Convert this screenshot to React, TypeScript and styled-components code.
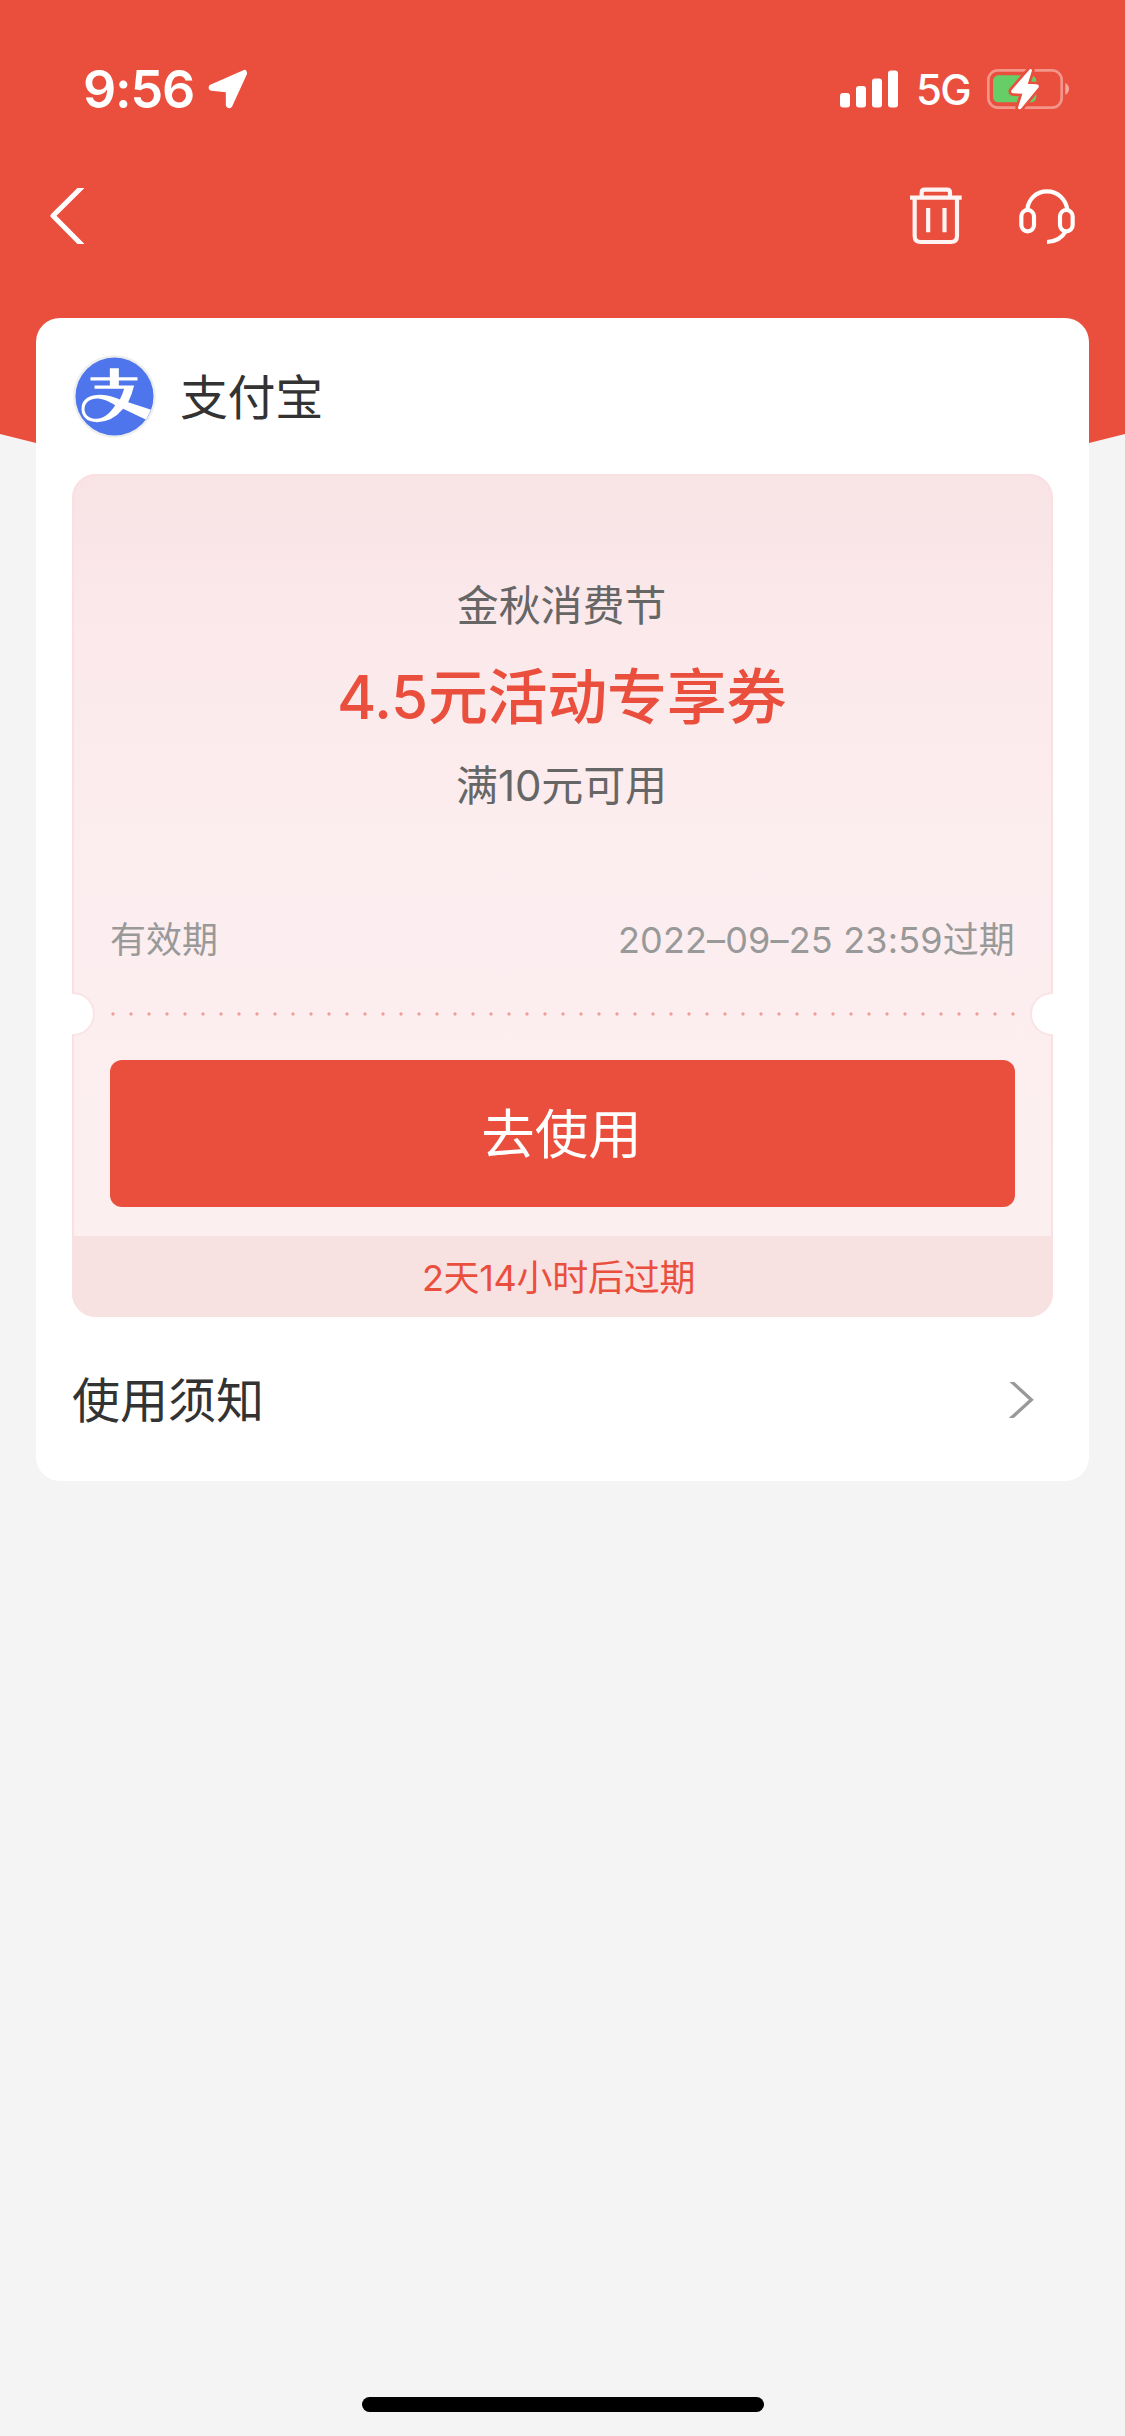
import React from 'react';
import styled, { createGlobalStyle } from 'styled-components';

const red = '#ea4f3d';

const GlobalStyle = createGlobalStyle`
  * { box-sizing: border-box; }
  body {
    margin: 0;
    background: #f4f4f4;
    font-family: Inter, 'Noto Sans CJK SC', sans-serif;
  }
`;

const Page = styled.div`
  width: 1125px;
  height: 2436px;
  display: flex;
  flex-direction: column;
  background: #f4f4f4;
  overflow: hidden;
`;

const Hero = styled.header`
  flex: none;
  height: 443px;
  background: ${red};
  color: #fff;
  clip-path: polygon(0 0, 100% 0, 100% 434px, 1089px 443px, 36px 443px, 0 434px);
`;

const StatusBar = styled.div`
  height: 134px;
  padding: 44px 55px 0 83px;
  display: flex;
  align-items: center;
  justify-content: space-between;
`;

const StatusGroup = styled.div<{ $gap: number }>`
  display: flex;
  align-items: center;
  gap: ${(p) => p.$gap}px;
`;

const Time = styled.span`
  width: 112px;
  padding-top: 2px;
  font-size: 52px;
  line-height: 60px;
  font-weight: 600;
  letter-spacing: -1.2px;
  white-space: nowrap;
`;

const Network = styled.span`
  width: 53px;
  padding-top: 2px;
  font-size: 42px;
  line-height: 60px;
  font-weight: 500;
  letter-spacing: -1.8px;
  white-space: nowrap;
`;

const NavBar = styled.nav`
  height: 163px;
  padding: 0 50px;
  display: flex;
  align-items: center;
  justify-content: space-between;
`;

const NavActions = styled.div`
  display: flex;
  gap: 57px;
`;

const Icon = styled.svg<{ $w: number; $h: number }>`
  display: block;
  flex: none;
  width: ${(p) => p.$w}px;
  height: ${(p) => p.$h}px;
`;

const Card = styled.main`
  position: relative;
  flex: none;
  margin: -125px 36px 0;
  height: 1163px;
  padding: 0 36px;
  border-radius: 24px;
  background: #fff;
`;

const Merchant = styled.div`
  height: 156px;
  padding-left: 1px;
  display: flex;
  align-items: center;
  gap: 24px;
`;

const MerchantName = styled.span`
  padding-top: 4px;
  font-size: 48px;
  line-height: 60px;
  letter-spacing: -0.4px;
  color: #333;
`;

const Coupon = styled.section`
  height: 843px;
  display: flex;
  flex-direction: column;
  border-radius: 24px;
  overflow: hidden;
  background: linear-gradient(#f8e3e5 0, #fbe9eb 160px, #fceef0 430px, #fcefef 100%);
  box-shadow: inset 0 0 0 2px #fae0e2;
`;

const Offer = styled.div`
  height: 436px;
  padding: 102px 2px 0 0;
  display: flex;
  flex-direction: column;
  align-items: center;
`;

const OfferNote = styled.p`
  margin: 0;
  font-size: 42px;
  line-height: 60px;
  letter-spacing: -0.1px;
  color: #666;
  white-space: nowrap;
`;

const OfferTitle = styled.h1`
  margin: 16px 0 14px;
  font-size: 60px;
  line-height: 90px;
  font-weight: 500;
  letter-spacing: -0.3px;
  color: ${red};
  white-space: nowrap;
`;

const Validity = styled.div`
  height: 60px;
  padding: 0 38px;
  display: flex;
  justify-content: space-between;
  font-size: 36px;
  line-height: 61px;
  color: #999;
`;

const Expiry = styled.span`
  letter-spacing: 0.15px;
`;

const TearLine = styled.div`
  height: 90px;
  padding-bottom: 3px;
  display: flex;
  align-items: center;
  justify-content: space-between;
`;

const Notch = styled.i<{ $side: 'left' | 'right' }>`
  width: 23px;
  height: 44px;
  background: #fff;
  border: 2px solid #fae3e5;
  border-${(p) => p.$side}: 0;
  border-radius: ${(p) => (p.$side === 'left' ? '0 22px 22px 0' : '22px 0 0 22px')};
`;

const Dots = styled.div`
  width: 918px;
  height: 4px;
  background: radial-gradient(circle at 9px 2px, #f0a09a 1.2px, transparent 2.1px) 0 0 / 18px 4px repeat-x;
`;

const UseButton = styled.button`
  height: 147px;
  margin: 0 38px;
  padding: 3px 2px 0 0;
  border: 0;
  border-radius: 12px;
  background: ${red};
  color: #fff;
  font: 400 53.5px/144px Inter, 'Noto Sans CJK SC', sans-serif;
`;

const Countdown = styled.div`
  margin-top: 29px;
  height: 81px;
  padding: 2px 8px 0 0;
  background: #f8e1e1;
  color: ${red};
  font-size: 36px;
  line-height: 80px;
  letter-spacing: -0.3px;
  text-align: center;
`;

const NoticeRow = styled.div`
  height: 166px;
  padding-right: 19px;
  display: flex;
  align-items: center;
  justify-content: space-between;
  font-size: 48px;
  line-height: 60px;
  color: #333;
`;

const NoticeLabel = styled.span`
  padding-top: 1px;
`;

const HomeIndicator = styled.div`
  flex: none;
  width: 402px;
  height: 15px;
  margin: auto auto 24px;
  border-radius: 8px;
  background: #000;
`;

const LocationArrow = () => (
  <Icon $w={40} $h={40} viewBox="440 59 120 120">
    <path d="M553 67L452 111Q448 117 454 119L497 123Q502 125 502 130V168Q506 175 511 168L555 72Z" fill="#fff" stroke="#fff" strokeWidth="11" strokeLinejoin="round" />
  </Icon>
);

const Signal = () => (
  <Icon $w={58} $h={38} viewBox="0 0 58 38" fill="#fff">
    <rect x="0" y="23" width="10" height="14.5" rx="3" />
    <rect x="16" y="16" width="10" height="21.5" rx="3" />
    <rect x="32" y="8.5" width="10" height="29" rx="3" />
    <rect x="48" y="0.5" width="10" height="37" rx="3" />
  </Icon>
);

const bolt = 'M630 58L575 121Q573 127 579 127L609 128L595 172Q597 177 601 173L653 110Q655 104 648 104L620 102L633 60Z';

const Battery = () => (
  <Icon $w={83} $h={42} viewBox="500 53 249 126">
    <rect x="504" y="60" width="220" height="112" rx="29" fill="none" stroke="#fff" strokeOpacity="0.4" strokeWidth="8" />
    <rect x="518" y="75" width="130" height="81" rx="16" fill="#67ce67" />
    <path d="M735 98Q746 104 746 115Q746 127 735 133Z" fill="#fff" fillOpacity="0.5" />
    <path d={bolt} fill={red} stroke={red} strokeWidth="20" strokeLinejoin="round" />
    <path d={bolt} fill="#fff" stroke="#fff" strokeWidth="4" strokeLinejoin="round" />
  </Icon>
);

const Back = () => (
  <Icon $w={34} $h={56} viewBox="151 54 102 168">
    <path d="M258 40L160 137.500L258 236" fill="none" stroke="#fff" strokeWidth="15" strokeLinejoin="round" />
  </Icon>
);

const Trash = () => (
  <Icon $w={52} $h={58} viewBox="89 49 156 174" fill="none" stroke="#fff" strokeOpacity="0.94" strokeWidth="12.5">
    <path d="M124 81V66Q124 57 133 57H200Q209 57 209 66V81M89 81H244M103 81V196Q103 214 121 214H212Q230 214 230 196V81M143.500 112V185M192.500 112V185" />
  </Icon>
);

const Headset = () => (
  <Icon $w={56} $h={58} viewBox="417 49 168 174" fill="none" stroke="#fff" strokeWidth="12.5">
    <path d="M442 118C444 86 468 62 501 62S558 86 562 118" />
    <rect x="424" y="118" width="38" height="64" rx="19" />
    <rect x="540" y="118" width="38" height="64" rx="19" />
    <path d="M557 182Q540 213 501 214" />
  </Icon>
);

const AlipayLogo = () => (
  <Icon $w={83} $h={83} viewBox="217.500 553.500 249 249">
    <circle cx="342" cy="678" r="124" fill="#eeeeef" />
    <clipPath id="disc"><circle cx="342" cy="678" r="117" /></clipPath>
    <g clipPath="url(#disc)">
      <rect x="220" y="556" width="244" height="244" fill="#4e75eb" />
      <path d="M328 593H355V620H411V630H355V650H328V630H270V620H328Z" fill="#fff" />
      <path
        fill="#fff"
        fillRule="evenodd"
        d="M282 645H401Q395 670 383 695L452 718L437 748L368 715Q335 755 290 755C258 755 243 738 243 715C243 685 268 673 300 673C322 673 340 680 358 687Q366 672 371 655H282ZM344 704C325 692 305 684 288 684C262 686 252 700 252 718C254 737 270 746 290 745C315 742 333 722 344 704Z"
      />
    </g>
  </Icon>
);

const ChevronRight = () => (
  <Icon $w={25} $h={36} viewBox="328 486 75 108">
    <path d="M328 478L395 539.500L326 602" fill="none" stroke="#999" strokeWidth="10" />
  </Icon>
);

export default function App() {
  return (
    <Page>
      <GlobalStyle />
      <Hero>
        <StatusBar>
          <StatusGroup $gap={12}>
            <Time>9:56</Time>
            <LocationArrow />
          </StatusGroup>
          <StatusGroup $gap={18}>
            <Signal />
            <Network>5G</Network>
            <Battery />
          </StatusGroup>
        </StatusBar>
        <NavBar>
          <Back />
          <NavActions>
            <Trash />
            <Headset />
          </NavActions>
        </NavBar>
      </Hero>
      <Card>
        <Merchant>
          <AlipayLogo />
          <MerchantName>支付宝</MerchantName>
        </Merchant>
        <Coupon>
          <Offer>
            <OfferNote>金秋消费节</OfferNote>
            <OfferTitle>4.5元活动专享券</OfferTitle>
            <OfferNote>满10元可用</OfferNote>
          </Offer>
          <Validity>
            <span>有效期</span>
            <Expiry>2022–09–25 23:59过期</Expiry>
          </Validity>
          <TearLine>
            <Notch $side="left" />
            <Dots />
            <Notch $side="right" />
          </TearLine>
          <UseButton>去使用</UseButton>
          <Countdown>2天14小时后过期</Countdown>
        </Coupon>
        <NoticeRow>
          <NoticeLabel>使用须知</NoticeLabel>
          <ChevronRight />
        </NoticeRow>
      </Card>
      <HomeIndicator />
    </Page>
  );
}
